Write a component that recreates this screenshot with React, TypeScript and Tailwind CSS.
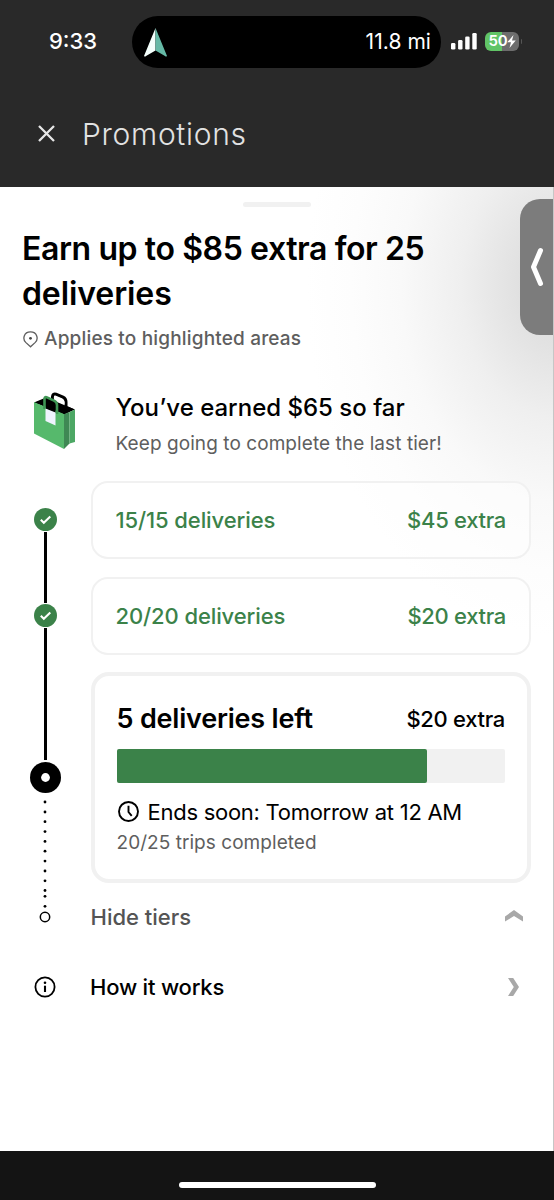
import React from "react";

const DOTS = [9, 19, 28.7, 38.6, 48.4, 58.2, 68.1, 78, 87.8, 97.5, 103.3, 113.3];

function StatusBar() {
  return (
    <div className="flex h-[84px] items-start pt-4 text-white">
      <div className="w-[132px] pl-[49px] pt-[10px] font-['Inter',sans-serif] text-[22px] leading-[31px] font-medium tracking-[0px]">9:33</div>
      <div className="flex h-[52px] w-[309px] items-center justify-between rounded-full bg-black pr-[10px] pl-[12px]">
        <svg width="24" height="30" viewBox="0 0 24 30">
          <path d="M11.5 1 L0 29 Q1 30 2 29 L11.5 23.5Z" fill="#f4fffc" />
          <path d="M11.5 1 L23 29 Q22 30 21 29 L11.5 23.5Z" fill="#65b9a6" />
        </svg>
        <span className="font-['Inter',sans-serif] text-[21px] tracking-[0.05px]">11.8 mi</span>
      </div>
      <svg className="mt-[16px] ml-[10px]" width="26" height="18" viewBox="0 0 26 18" fill="#fff">
        <rect x="0" y="11" width="4.4" height="6.5" rx="1.3" />
        <rect x="7.1" y="8" width="4.4" height="9.5" rx="1.3" />
        <rect x="14.2" y="4.5" width="4.4" height="13" rx="1.3" />
        <rect x="21.3" y="1" width="4.4" height="16.5" rx="1.3" />
      </svg>
      <div className="mt-4 ml-[8px] flex items-center">
        <div className="flex h-[19px] w-[34px] items-center rounded-[6px] bg-[linear-gradient(90deg,#61c466_50%,#6d6d6d_50%)] pl-[3.5px]">
          <span className="font-['Inter',sans-serif] text-[15px] font-semibold tracking-[-0.3px]">50</span>
          <svg width="9" height="13" viewBox="0 0 9 13" fill="#fff">
            <path d="M6.5 0 L0.3 7.2 H4 L2.5 13 L8.7 5.5 H5Z" />
          </svg>
        </div>
        <div className="ml-[1.5px] h-[5px] w-[1.5px] rounded-r-full bg-[#555555]" />
      </div>
    </div>
  );
}

function CheckDot() {
  return (
    <svg className="shrink-0" width="23" height="23" viewBox="0 0 23 23">
      <circle cx="11.5" cy="11.5" r="11.5" fill="#3b8249" />
      <path d="M6.8 11.8 L9.8 14.8 L16.3 8.6" fill="none" stroke="#fff" strokeWidth="2.1" />
    </svg>
  );
}

function Bag() {
  return (
    <svg width="42" height="58" viewBox="0 0 42 58">
      <path d="M0 10.5 L12 5.5 L41 17.5 L30 22.5Z" fill="#000" />
      <path d="M18.5 9 V4.5 Q19 1.2 22 2.2 L29 5.2 Q32 6.7 32 10 V16" fill="none" stroke="#000" strokeWidth="3" />
      <path d="M19.9 5 Q20.3 3.6 21.8 4.2 L28.5 7 Q30.5 8 30.5 10 V12.5 L19.9 8.2Z" fill="#fff" />
      <path d="M0 10 L30 22 V57 L0 41.5Z" fill="#56b96c" />
      <path d="M30 22 L35.5 20 V51.5 L30 57Z" fill="#3f8854" />
      <path d="M35.5 20 L41 17.5 V50 L35.5 51.5Z" fill="#4ca764" />
      <path d="M1.5 10.6 L9.5 7.2 V13.8Z M24 16 L34 14.5 L40 17.2 L30 22Z" fill="#000" />
      <path d="M11.5 8 L21.5 12 V21 L11.5 17Z" fill="#000" />
      <path d="M10.5 17 V6.5 Q11 4.6 13 5.4 L20 8.6 Q23 10 23 13 V22" fill="none" stroke="#3f9654" strokeWidth="2.6" />
      <path d="M11.5 16.5 L21.5 20.5 V33.5 L11.5 29Z" fill="#eff3fe" />
    </svg>
  );
}

function Tier({ label, reward }: { label: string; reward: string }) {
  return (
    <div className="flex h-[78px] items-center justify-between rounded-[17px] border-[2.5px] border-[#f1f1f1] bg-white/45 px-[23px] text-[22px] leading-[30px] font-medium text-[#3b8249]">
      <span className="tracking-[-0.1px]">{label}</span>
      <span className="tracking-[-0.3px]">{reward}</span>
    </div>
  );
}

export default function App() {
  return (
    <div className="relative flex h-[1200px] w-[554px] flex-col overflow-hidden bg-white font-['Inter','Liberation_Sans',sans-serif] text-black">
      <header className="h-[187px] shrink-0 bg-[#292929]">
        <StatusBar />
        <div className="flex h-[100px] items-center pl-[38px]">
          <svg className="-mt-[2px]" width="17" height="17" viewBox="0 0 17 17" fill="none" stroke="#e6e6e6" strokeWidth="2.3">
            <path d="M1 1 L16 16 M16 1 L1 16" />
          </svg>
          <h1 className="ml-[27px] text-[30px] font-light tracking-[0.7px] text-[#e2e2e2]">Promotions</h1>
        </div>
      </header>

      <main className="h-[964px] shrink-0 border-r border-[#c6c6c6] bg-[radial-gradient(ellipse_250px_350px_at_556px_98px,#d9d9d9_0%,#e0e0e0_14%,#efefef_38%,#f9f9f9_62%,#fdfdfd_82%,#ffffff_100%)]">
        <div className="flex h-[39px] justify-center pt-[15px]">
          <div className="h-[5px] w-[68px] rounded-full bg-[#f1f1f1]" />
        </div>
        <h2 className="pl-[22px] text-[32px] leading-[45px] font-semibold tracking-[-0.4px]">
          Earn up to $85 extra for 25
          <br />
          <span className="tracking-[-0.1px]">deliveries</span>
        </h2>
        <div className="flex h-[47px] items-center pl-[23px] text-[#5e5e5e]">
          <svg className="mr-[6px]" width="15" height="17" viewBox="0 0 15 17">
            <path d="M7.5 15.8 L2.7 11.4 C-0.6 8.2 0.6 0.9 7.5 0.9 C14.4 0.9 15.6 8.2 12.3 11.4Z" fill="none" stroke="#5e5e5e" strokeWidth="1.3" />
            <circle cx="7.5" cy="7.3" r="1.4" fill="#444" />
          </svg>
          <span className="text-[19px] font-medium tracking-[0.17px]">Applies to highlighted areas</span>
        </div>
        <div className="flex h-[118px] pt-[29px]">
          <div className="w-[115.5px] pl-[34px]">
            <Bag />
          </div>
          <div>
            <div className="text-[24px] leading-[32px] font-medium tracking-[0px]">You’ve earned $65 so far</div>
            <div className="mt-[4px] text-[19px] leading-[32px] tracking-[0.07px] text-[#5e5e5e]">Keep going to complete the last tier!</div>
          </div>
        </div>

        <div className="flex h-[458px]">
          <div className="flex w-[90.5px] flex-col items-center pt-[27px]">
            <CheckDot />
            <div className="mt-px h-[71px] w-[3px] bg-black" />
            <div className="mt-px flex">
              <CheckDot />
            </div>
            <div className="mt-px h-[132px] w-[3px] bg-black" />
            <svg className="mt-[2px] shrink-0" width="31" height="31" viewBox="0 0 31 31">
              <circle cx="15.5" cy="15.5" r="15.5" />
              <circle cx="15.5" cy="15.5" r="4.4" fill="#fff" />
            </svg>
            <svg className="shrink-0" width="12" height="130" viewBox="0 0 12 130">
              {DOTS.map((y) => (
                <circle key={y} cx="6" cy={y} r="1.4" />
              ))}
              <circle cx="6" cy="124" r="4.7" fill="none" stroke="#000" strokeWidth="1.5" />
            </svg>
          </div>
          <div className="w-[440.5px]">
            <Tier label="15/15 deliveries" reward="$45 extra" />
            <div className="h-[18px]" />
            <Tier label="20/20 deliveries" reward="$20 extra" />
            <div className="mt-[17px] h-[211px] rounded-[18px] border-[4px] border-[#f1f1f1] bg-white px-[22px] pt-[23px]">
              <div className="flex h-[50px] items-start justify-between">
                <span className="text-[27px] leading-[40px] font-semibold tracking-[-0.2px]">5 deliveries left</span>
                <span className="text-[22px] leading-[40px] font-medium tracking-[-0.3px]">$20 extra</span>
              </div>
              <div className="h-[34px] rounded-[2px] bg-[#f1f1f1]">
                <div className="h-full w-[80%] rounded-[2px] bg-[#3b8249]" />
              </div>
              <div className="mt-[13px] flex h-[32px] items-center">
                <svg className="mr-[9px] ml-[1px] -mt-[2px]" width="21" height="21" viewBox="0 0 21 21" fill="none" stroke="#000" strokeWidth="1.9">
                  <circle cx="10.5" cy="10.5" r="9.5" />
                  <path d="M10.5 4.8 V11 L13.7 14.8" />
                </svg>
                <span className="text-[22px] tracking-[-0.27px]">Ends soon: Tomorrow at 12 AM</span>
              </div>
              <div className="text-[19px] leading-[30px] tracking-[0.05px] text-[#5e5e5e]">20/25 trips completed</div>
            </div>
            <div className="flex h-[69px] items-center justify-between pr-[8px] text-[22px] font-medium text-[#545454]">
              <span>Hide tiers</span>
              <svg className="-mt-[3px]" width="18" height="12" viewBox="0 0 18 12" fill="#a8a8a8">
                <path d="M0 6.5 L9 0 L18 6.5 V11.5 L9 6 L0 11.5Z" />
              </svg>
            </div>
          </div>
        </div>
        <div className="flex h-[70px] items-center pt-[26px] pr-[33px] pl-[34px]">
          <svg className="mr-[34px]" width="22" height="22" viewBox="0 0 22 22">
            <circle cx="11" cy="11" r="9.6" fill="none" stroke="#000" strokeWidth="1.8" />
            <path d="M11 9.7 V16" stroke="#000" strokeWidth="2.1" />
            <circle cx="11" cy="6.8" r="1.3" />
          </svg>
          <span className="text-[22px] font-medium tracking-[-0.2px]">How it works</span>
          <svg className="ml-auto" width="12" height="18" viewBox="0 0 12 18" fill="#a8a8a8">
            <path d="M0 0 H5.2 L11 9 L5.2 18 H0 L5.8 9Z" />
          </svg>
        </div>
      </main>

      <footer className="flex grow justify-center bg-[#141414] pt-[31px]">
        <div className="h-[6px] w-[197px] rounded-full bg-white" />
      </footer>

      <div className="absolute top-[199px] right-px flex h-[136px] w-[33px] items-center justify-center rounded-l-[20px] bg-[#7c7c7c]">
        <svg width="14" height="40" viewBox="0 0 14 40" fill="none" stroke="#fff" strokeWidth="5" strokeLinecap="round" strokeLinejoin="round">
          <path d="M10.5 3.5 L3.5 20 L10.5 36.5" />
        </svg>
      </div>
    </div>
  );
}
